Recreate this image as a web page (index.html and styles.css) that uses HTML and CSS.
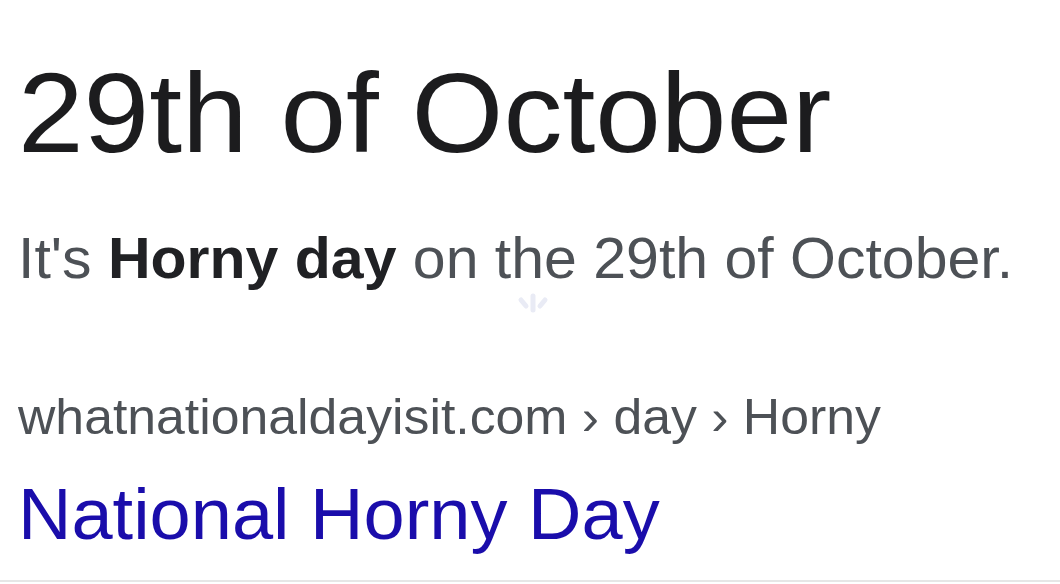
FILE: index.html
```html
<!DOCTYPE html>
<html>
<head>
<meta charset="utf-8">
<link rel="stylesheet" href="styles.css">
</head>
<body>
<div class="page">
  <div class="result">
    <div class="answer">29th of October</div>
    <div class="snippet">It's <b class="hl">Horny day</b> on the 29th of October.</div>
    <div class="cite">whatnationaldayisit.com › day › Horny</div>
    <a class="title" href="#">National Horny Day</a>
  </div>
  <svg class="spinner" width="40" height="24" viewBox="0 0 40 24">
    <g stroke="#e9ebf5" stroke-width="5" stroke-linecap="round">
      <line x1="20" y1="4" x2="20" y2="18"/>
      <line x1="8" y1="8" x2="13" y2="14"/>
      <line x1="32" y1="8" x2="27" y2="14"/>
    </g>
  </svg>
</div>
</body>
</html>
```
FILE: styles.css
```css
html, body {
  margin: 0;
  padding: 0;
  background: #ffffff;
}
.page {
  position: relative;
  width: 1060px;
  height: 582px;
  box-sizing: border-box;
  padding: 56px 0 0 18px;
  border-bottom: 2px solid #e6e6e6;
  font-family: "Liberation Sans", Arial, sans-serif;
  overflow: hidden;
}
.result {
  transform: scaleX(1.035);
  transform-origin: 0 0;
}
.answer {
  font-size: 114px;
  line-height: 114px;
  color: #1c1c1e;
  white-space: nowrap;
}
.snippet {
  margin-top: 60px;
  font-size: 57px;
  line-height: 57px;
  color: #4d5156;
  white-space: nowrap;
}
.hl {
  color: #202124;
  font-weight: bold;
}
.cite {
  margin-top: 105px;
  font-size: 50px;
  line-height: 50px;
  color: #4d5156;
  white-space: nowrap;
}
.title {
  display: block;
  margin-top: 37px;
  font-size: 71.5px;
  line-height: 71.5px;
  color: #1a0dab;
  text-decoration: none;
  white-space: nowrap;
}
.spinner {
  position: absolute;
  left: 513px;
  top: 292px;
}
```
